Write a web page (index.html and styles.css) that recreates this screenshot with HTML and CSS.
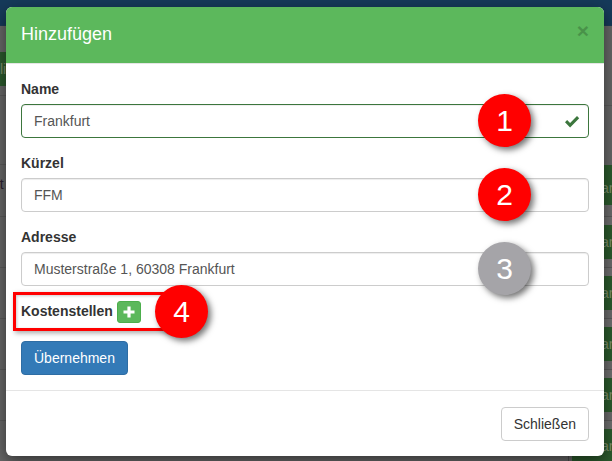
FILE: index.html
```html
<!DOCTYPE html>
<html lang="de">
<head>
<meta charset="utf-8">
<title>Hinzufügen</title>
<link rel="stylesheet" href="styles.css">
</head>
<body>
<div class="backdrop">
  <div class="topbar"></div>
  <div class="left-strip">
    <div class="left-green">li</div>
    <div class="left-row short"></div>
    <div class="left-row tall"></div>
    <div class="left-row med">nt</div>
    <div class="left-row"></div>
    <div class="left-row"></div>
    <div class="left-row"></div>
    <div class="left-row"></div>
  </div>
  <div class="right-strip">
    <div class="cell first">an</div>
    <div class="spacer first-spacer"></div>
    <div class="cell">an</div>
    <div class="spacer"></div>
    <div class="cell">an</div>
    <div class="spacer"></div>
    <div class="cell">an</div>
    <div class="spacer"></div>
    <div class="cell">an</div>
    <div class="spacer"></div>
    <div class="cell">an</div>
  </div>
  <div class="right-line"></div>
  <div class="divider-line"></div>
</div>

<main class="modal">
  <header class="modal-header">
    <h4 class="modal-title">Hinzufügen</h4>
    <span class="close">×</span>
  </header>
  <div class="modal-body">
    <div class="form-group">
      <label class="label">Name</label>
      <div class="input success">Frankfurt
        <svg class="check" viewBox="0 0 16 13" aria-hidden="true"><path d="M1 7.2 3.1 5l3 3L13 1l2.2 2.2-9.1 9.2z"/></svg>
      </div>
    </div>
    <div class="form-group">
      <label class="label">Kürzel</label>
      <div class="input">FFM</div>
    </div>
    <div class="form-group">
      <label class="label">Adresse</label>
      <div class="input">Musterstraße 1, 60308 Frankfurt</div>
    </div>
    <div class="costs">
      <label class="label inline">Kostenstellen</label>
      <span class="add-btn"><svg viewBox="0 0 12 12" aria-hidden="true"><path d="M4.4 0.5h3.2v3.9h3.9v3.2H7.6v3.9H4.4V7.6H0.5V4.4h3.9z"/></svg></span>
    </div>
    <button class="btn primary">Übernehmen</button>
  </div>
  <footer class="modal-footer">
    <button class="btn default">Schließen</button>
  </footer>
</main>

<div class="red-box"></div>
<div class="badge b1">1</div>
<div class="badge b2">2</div>
<div class="badge b3">3</div>
<div class="badge b4">4</div>
</body>
</html>
```

FILE: styles.css
```css
* { box-sizing: border-box; }
html, body { margin: 0; padding: 0; }
body {
  position: relative;
  width: 612px;
  height: 461px;
  overflow: hidden;
  font-family: "Liberation Sans", Arial, sans-serif;
  font-size: 14px;
  line-height: 20px;
  color: #333;
  background: #666;
  padding: 7px 8px 0 6px;
}

/* dimmed page behind the dialog */
.backdrop { position: absolute; inset: 0; overflow: hidden; background: #676767; }
.topbar { height: 26px; background: #163a5a; border-bottom: 1px solid #1d3c57; }
.left-strip { position: absolute; left: 0; top: 52px; width: 6px; color: #8a9a7a; }
.left-green { height: 34px; background: #2c5a2d; line-height: 34px; font-size: 14px; overflow: hidden; color: #7d8f6b; }
.left-row { height: 51px; border-bottom: 1px solid #5a5a5a; overflow: hidden; }
.left-row.short { height: 10px; }
.left-row.tall { height: 69px; }
.left-row.med { height: 52px; line-height: 38px; color: #2a2030; text-indent: -8px; white-space: nowrap; }
.right-strip { position: absolute; left: 572px; top: 165px; width: 40px; display: flex; flex-direction: column; }
.cell { height: 34px; background: #2c5a2d; color: #7d8f6b; line-height: 34px; padding-left: 29px; overflow: hidden; white-space: nowrap; flex: none; }
.cell.first { height: 40px; line-height: 46px; }
.spacer { height: 17px; background: #6b6b6b; border-bottom: 8px solid #6f6f6f; flex: none; box-shadow: inset 0 -1px 0 #5a5a5a; }
.first-spacer { height: 20px; }
.right-line { position: absolute; left: 604px; top: 105px; width: 8px; height: 1px; background: #5a5a5a; }
.divider-line { position: absolute; left: 568px; top: 456px; width: 1px; height: 5px; background: #4c4c4c; }

/* dialog */
.modal {
  position: relative;
  width: 598px;
  height: 449px;
  background: #fff;
  border-radius: 6px;
  box-shadow: 0 5px 15px rgba(0, 0, 0, .5);
  display: flex;
  flex-direction: column;
}
.modal-header {
  height: 57px;
  flex: none;
  padding: 15px;
  background: #5cb85c;
  border-radius: 6px 6px 0 0;
  display: flex;
  justify-content: space-between;
  align-items: flex-start;
  border-bottom: 1px solid #e5e5e5;
}
.modal-title { margin: 0; font-size: 18px; font-weight: 500; line-height: 25.7px; color: #fff; }
.close { font-size: 21px; font-weight: 700; line-height: 21px; color: #000; opacity: .2; margin-top: -2px; }
.modal-body { padding: 15px; flex: 1; }
.form-group { margin-bottom: 15px; }
.label { display: block; font-weight: 700; margin-bottom: 5px; }
.label.inline { display: inline-block; margin: 0; }
.input {
  position: relative;
  height: 34px;
  padding: 6px 12px;
  color: #555;
  background: #fff;
  border: 1px solid #ccc;
  border-radius: 4px;
  box-shadow: inset 0 1px 1px rgba(0, 0, 0, .075);
}
.input.success { border-color: #3c763d; }
.check { position: absolute; right: 8px; top: 10px; width: 16px; height: 13px; fill: #3c763d; }
.costs { height: 25px; display: flex; align-items: flex-start; gap: 4px; margin-bottom: 15px; }
.add-btn {
  width: 24px;
  height: 22px;
  background: #5cb85c;
  border: 1px solid #4cae4c;
  border-radius: 3px;
  display: flex;
  align-items: center;
  justify-content: center;
}
.add-btn svg { width: 12px; height: 12px; fill: #fff; }
.btn {
  font: inherit;
  height: 34px;
  padding: 6px 12px;
  border: 1px solid transparent;
  border-radius: 4px;
  display: block;
}
.btn.primary { color: #fff; background: #337ab7; border-color: #2e6da4; }
.btn.default { color: #333; background: #fff; border-color: #ccc; }
.modal-footer { flex: none; padding: 16px 15px 15px; border-top: 1px solid #e5e5e5; display: flex; justify-content: flex-end; }

/* annotations over the screenshot */
.red-box {
  position: absolute;
  left: 13px;
  top: 292px;
  width: 160px;
  height: 39px;
  border: 3px solid #f00;
  box-shadow: 2px 2px 5px rgba(0, 0, 0, .35), inset 1px 1px 3px rgba(0, 0, 0, .2);
}
.badge {
  position: absolute;
  left: 478px;
  width: 53px;
  height: 53px;
  border-radius: 50%;
  background: #f00;
  color: #fff;
  font-size: 30px;
  line-height: 53px;
  text-align: center;
  box-shadow: 3px 3px 6px rgba(0, 0, 0, .55);
}
.b1 { top: 94px; }
.b2 { top: 168px; }
.b3 { top: 242px; background: #a5a4a8; }
.b4 { top: 285px; left: 155px; }
```
